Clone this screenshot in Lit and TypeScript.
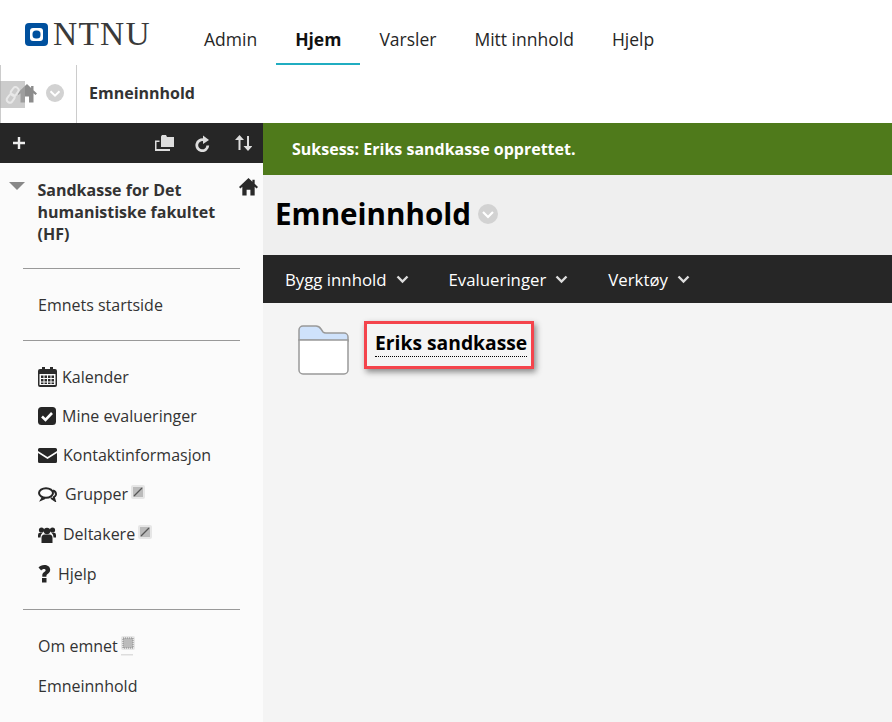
import { LitElement, html, css } from "lit";
import { customElement } from "lit/decorators.js";

const chev = (c: string) => html`<svg class="chev" width="13" height="9" viewBox="0 0 13 9"><path d="M1.500 1.500 6.500 6.500l5-5" fill="none" stroke="${c}" stroke-width="2.400"/></svg>`;
const circ = (s: number, bg: string) => html`<svg width="${s}" height="${s}" viewBox="0 0 20 20"><circle cx="10" cy="10" r="10" fill="${bg}"/><path d="M5 8 10 13 15 8" fill="none" stroke="#fff" stroke-width="2.200"/></svg>`;
const home = (c: string, s: number) => html`<svg width="${s}" height="${s}" viewBox="0 0 20 20"><path fill="${c}" d="M10 1 0 10.500 1.500 12 3.500 10.200V19.500H8v-6h4v6h4.500V10.200L18.500 12l1.500-1.500-3.500-3.300V3h-2.400v2z"/></svg>`;

@customElement("app-root")
export class AppRoot extends LitElement {
  static styles = css`
    :host { display: block; width: 892px; height: 722px; overflow: hidden; position: relative; background: #fff; font-family: "Open Sans", sans-serif; color: #262626; }
    .top { height: 65px; display: flex; }
    .logo { display: flex; align-items: center; width: 204px; padding: 0 0 0 25px; box-sizing: border-box; height: 46px; margin-top: 11px; gap: 5px; }
    .logo span { font: 33.500px/1 "Liberation Serif", serif; color: #3a3a3a; letter-spacing: 1.200px; }
    .tabs { display: flex; margin-left: -19px; }
    .tab { padding: 28px 19px 0; height: 37px; font-size: 17.500px; line-height: 23px; color: #262626; white-space: nowrap; }
    .tab.on { font-weight: 700; border-bottom: 2px solid #20adc1; height: 35px; color: #111; }
    .crumb { height: 58px; display: flex; align-items: stretch; position: relative; }
    .crumb-l { width: 77px; box-sizing: border-box; border-left: 1px solid #ccc; border-right: 1px solid #ccc; display: flex; align-items: center; gap: 9px; padding: 0 0 2px 16px; }
    .crumb b { font-size: 16px; font-weight: 700; color: #333; padding: 0 0 2px 12px; align-self: center; }
    .chain { position: absolute; left: 0; top: 16px; width: 25px; height: 27px; background: rgba(170,170,170,.6); display: flex; align-items: center; justify-content: center; }
    .body { display: flex; height: 599px; }
    .side { width: 263px; background: #fbfbfb; flex: none; }
    .tool { height: 40px; background: #262626; display: flex; align-items: center; padding: 0 11px 0 12px; gap: 21px; }
    .tool .sp { flex: 1; }
    .tool .sort { margin-left: 4px; }
    .ct { display: flex; padding: 16px 5px 0 9px; position: relative; }
    .ct .arrow { width: 0; height: 0; border: 8px solid transparent; border-top: 8px solid #888; border-bottom: 0; margin-top: 3px; flex: none; }
    .ct b { font-size: 16px; line-height: 22px; font-weight: 700; color: #333; margin-left: 12.500px; width: 200px; }
    .ct .h { position: absolute; right: 5px; top: 14px; }
    hr { border: 0; border-top: 1px solid #999; margin: 0 23px; height: 0; }
    .item { font-size: 16px; line-height: 22px; color: #333; display: flex; align-items: center; padding-left: 38px; white-space: nowrap; }
    .lab { display: flex; align-items: center; }
    .mark { margin-left: 3px; margin-top: -5px; }
    .a { margin-top: 25px; }
    .main { flex: 1; background: #f4f4f4; display: flex; flex-direction: column; }
    .ok { height: 52px; background: #4f7a1b; color: #fff; font-size: 16px; font-weight: 700; line-height: 52px; padding-left: 29px; }
    .title { height: 80px; background: #efefef; display: flex; align-items: center; padding: 0 0 2px 12px; box-sizing: border-box; gap: 7px; }
    .title h1 { margin: 0; font-size: 29.600px; font-weight: 700; color: #000; line-height: 40px; }
    .bar { height: 48px; background: #262626; display: flex; align-items: center; color: #fff; font-size: 16.800px; padding-left: 22px; }
    .bar span { display: flex; align-items: center; gap: 9px; margin-right: 40px; }
    .rows { display: flex; padding: 18px 0 0 35px; gap: 15px; }
    .link { border: 3px solid #f4444c; box-shadow: 2px 3px 6px rgba(0,0,0,.45); padding: 6px 4px 9px 8px; align-self: flex-start; }
    .link a { font-size: 19.300px; font-weight: 700; color: #000; line-height: 25px; display: block; border-bottom: 1px dotted #000; height: 26px; }
  `;

  private row(icon: unknown, label: string, top: number, gap: number, mark?: unknown) {
    return html`<div class="item" style="margin-top:${top}px;gap:${gap}px">${icon}<span class="lab">${label}${mark ?? ""}</span></div>`;
  }

  render() {
    const markX = html`<svg class="mark" width="14" height="14" viewBox="0 0 14 14"><rect width="14" height="14" rx="2" fill="#e6e6e6"/><rect x="2" y="2" width="10" height="10" fill="#bbb"/><path d="M3 11 11 3" stroke="#555" stroke-width="1.300"/></svg>`;
    const markD = html`<svg style="margin-left:3px" width="14" height="20" viewBox="0 0 14 20"><rect width="14" height="14" rx="2" fill="#e6e6e6"/><rect x="2" y="2" width="10" height="10" fill="#bbb" stroke="#888" stroke-dasharray="1 1"/><rect y="18" width="12" height="1.500" fill="#ddd"/></svg>`;
    return html`
      <div class="top">
        <div class="logo">
          <svg width="23" height="23" viewBox="0 0 23 23"><rect width="23" height="23" rx="4" fill="#00509e"/><rect x="5" y="5" width="13" height="13" rx="3" fill="#fff"/><rect x="7.500" y="7.500" width="8" height="8" rx="3.500" fill="#00509e"/></svg>
          <span>NTNU</span>
        </div>
        <div class="tabs">
          <div class="tab">Admin</div><div class="tab on">Hjem</div><div class="tab">Varsler</div><div class="tab">Mitt innhold</div><div class="tab">Hjelp</div>
        </div>
      </div>
      <div class="crumb">
        <div class="crumb-l">${home("#8c8c8c", 20)}${circ(18, "#d2d2d2")}</div>
        <b>Emneinnhold</b>
        <div class="chain"><svg width="16" height="18" viewBox="0 0 16 18"><g fill="none" stroke="#e8e8e8" stroke-width="2"><rect x="7" y="1" width="6" height="9" rx="3" transform="rotate(35 10 5)"/><rect x="3" y="8" width="6" height="9" rx="3" transform="rotate(35 6 12)"/></g></svg></div>
      </div>
      <div class="body">
        <div class="side">
          <div class="tool">
            <svg width="14" height="14" viewBox="0 0 14 14"><path d="M7 1v12M1 7h12" stroke="#eee" stroke-width="2.400"/></svg>
            <span class="sp"></span>
            <svg width="19" height="16" viewBox="0 0 19 16"><path fill="#ddd" d="M6 1.500 7 0h4l1 2h7v10H6zM0 5.500h4.500V7H1.500v7H15v2H0z"/></svg>
            <svg width="15" height="17" viewBox="0 0 15 17"><path fill="none" stroke="#ddd" stroke-width="2.800" d="M12.800 10.500A5.500 5.500 0 1 1 9 5"/><path fill="#ddd" d="M8 0.500 14 5 8 9z"/></svg>
            <svg class="sort" width="17" height="16" viewBox="0 0 17 16"><path fill="none" stroke="#ddd" stroke-width="2" d="M4.500 15V2M13 1v13"/><path fill="#ddd" d="M4.500 0 9 5H0zM13 16l-4.500-5h9z"/></svg>
          </div>
          <div class="ct"><i class="arrow"></i><b>Sandkasse for Det humanistiske fakultet (HF)</b><span class="h">${home("#2a2a2a", 19)}</span></div>
          <hr style="margin-top:23px" />
          <div class="item a">Emnets startside</div>
          <hr style="margin-top:24px" />
          ${this.row(html`<svg width="19" height="20" viewBox="0 0 19 20"><path fill="#2b2b2b" fill-rule="evenodd" d="M2 2h2V0h3v2h5V0h3v2h2a2 2 0 0 1 2 2v14a2 2 0 0 1-2 2H2a2 2 0 0 1-2-2V4a2 2 0 0 1 2-2zM1.500 7v11h16V7zM3 8.500h2.500V11H3zm3.500 0H9V11H6.500zm3.500 0h2.500V11H10zm3.500 0H16V11h-2.500zM3 12h2.500v2.500H3zm3.500 0H9v2.500H6.500zm3.500 0h2.500v2.500H10zm3.500 0H16v2.500h-2.500zM3 15.500h2.500V17H3zm3.500 0H9V17H6.500zm3.500 0h2.500V17H10zm3.500 0H16V17h-2.500z"/></svg>`, "Kalender", 25, 5)}
          ${this.row(html`<svg width="18" height="18" viewBox="0 0 18 18"><rect width="18" height="18" rx="3.500" fill="#262626"/><path d="M4 9.500 7.500 13 14 6" fill="none" stroke="#fff" stroke-width="2.600"/></svg>`, "Mine evalueringer", 17, 6)}
          ${this.row(html`<svg width="19" height="15" viewBox="0 0 19 15"><path fill="#262626" d="M1.500 0h16A1.500 1.500 0 0 1 19 1.500V3L9.500 9 0 3V1.500A1.500 1.500 0 0 1 1.500 0zM0 5l9.500 6L19 5v8.500a1.500 1.500 0 0 1-1.500 1.500h-16A1.500 1.500 0 0 1 0 13.500z"/></svg>`, "Kontaktinformasjon", 17, 6)}
          ${this.row(html`<svg width="19" height="15" viewBox="0 0 19 15"><g fill="none" stroke="#262626" stroke-width="2"><ellipse cx="8" cy="6" rx="7" ry="4.800"/><path d="M15 3.500c2 .8 3.300 2.500 2.800 4.500-.3 1-1 1.700-2 2.200l1 3.300-3.800-2.500"/><path d="M5 10l-1.500 2.500L7 11"/></g></svg>`, "Grupper", 17, 8, markX)}
          ${this.row(html`<svg width="18" height="17" viewBox="0 0 18 17"><g fill="#262626"><circle cx="9" cy="5" r="3.200"/><circle cx="3.500" cy="4" r="2.600"/><circle cx="14.500" cy="4" r="2.600"/><path d="M3.500 17V12q0-3.500 3-3.500h5q3 0 3 3.500v5zM0 11.500V9q0-2.200 2-2.200h2.500Q2.500 8.500 2.500 11v.5zM18 11.500V9q0-2.200-2-2.200h-2.500q2 1.700 2 4.200v.5z"/></g></svg>`, "Deltakere", 18, 7, markX)}
          ${this.row(html`<svg width="13" height="18" viewBox="0 0 13 18"><path fill="#262626" d="M4 13h4.500v4.500H4zM4.300 11.700V10c0-1.500 1-2.300 2-3 .8-.6 1.300-1 1.300-1.700 0-.8-.7-1.300-1.600-1.300-1.100 0-2 .5-2.800 1.500L.5 2.600C1.800 1 3.700 0 6.400 0c3 0 5.800 1.500 5.800 4.800 0 2.200-1.300 3.200-2.600 4.100-1 .7-1.200 1.200-1.200 2.800z"/></svg>`, "Hjelp", 18, 7)}
          <hr style="margin-top:24px" />
          <div class="item" style="margin-top:25px">Om emnet${markD}</div>
          <div class="item" style="margin-top:18px">Emneinnhold</div>
        </div>
        <div class="main">
          <div class="ok">Suksess: Eriks sandkasse opprettet.</div>
          <div class="title"><h1>Emneinnhold</h1>${circ(20, "#d2d2d2")}</div>
          <div class="bar"><span>Bygg innhold ${chev("#ddd")}</span><span>Evalueringer ${chev("#ddd")}</span><span>Verktøy ${chev("#ddd")}</span></div>
          <div class="rows">
            <svg width="51" height="50" viewBox="0 0 51 50" style="margin-top:4px"><path d="M1 15V5a4 4 0 0 1 4-4h13q3 0 5 3l2 3q1 1 3 1h18a4 4 0 0 1 4 4v4z" fill="#cfe2fb" stroke="#999" stroke-width="1.500"/><path d="M1 15h49v30a4 4 0 0 1-4 4H5a4 4 0 0 1-4-4z" fill="#fff" stroke="#999" stroke-width="1.500"/></svg>
            <div class="link"><a>Eriks sandkasse</a></div>
          </div>
        </div>
      </div>
    `;
  }
}
